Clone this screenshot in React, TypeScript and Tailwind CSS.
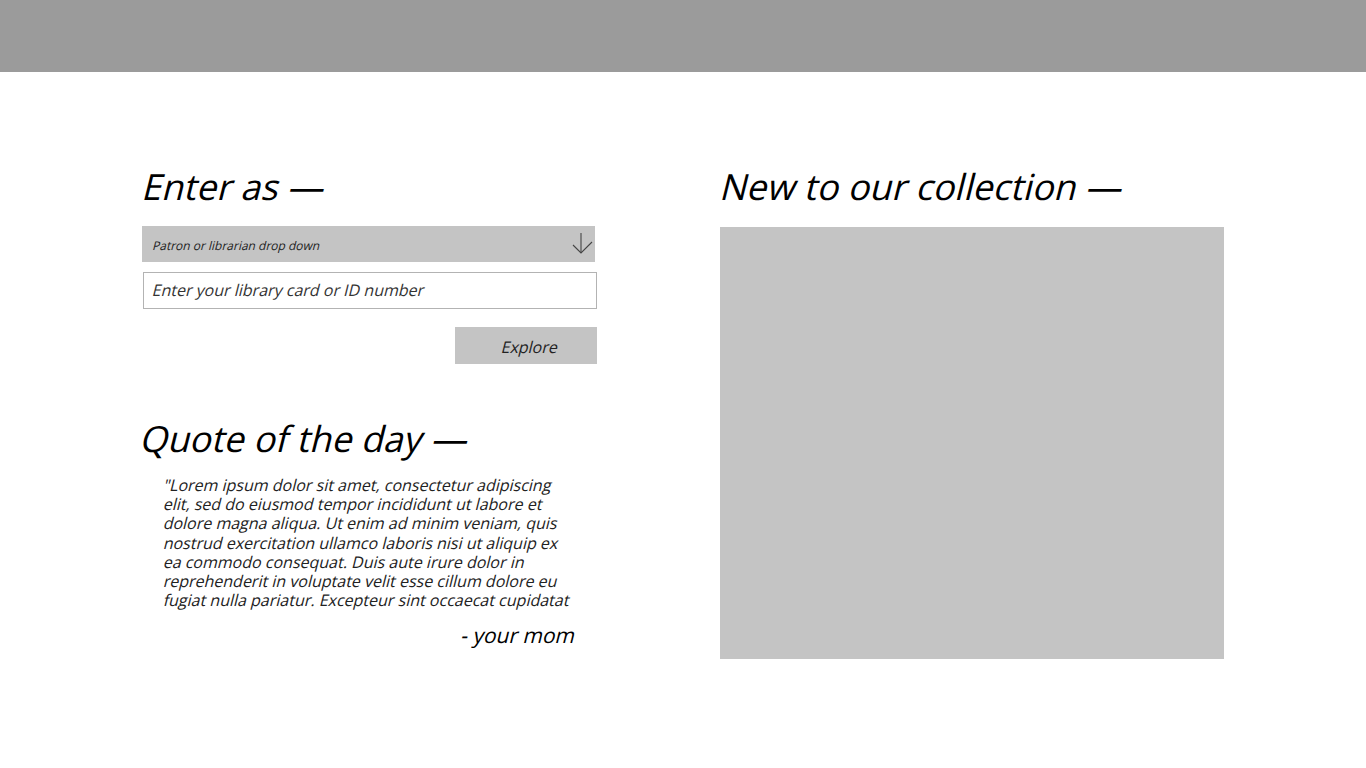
const quoteLines = [
  '"Lorem ipsum dolor sit amet, consectetur adipiscing',
  "elit, sed do eiusmod tempor incididunt ut labore et",
  "dolore magna aliqua. Ut enim ad minim veniam, quis",
  "nostrud exercitation ullamco laboris nisi ut aliquip ex",
  "ea commodo consequat. Duis aute irure dolor in",
  "reprehenderit in voluptate velit esse cillum dolore eu",
  "fugiat nulla pariatur. Excepteur sint occaecat cupidatat",
];

// slanted upright text, like a synthetic oblique
function Slant({ children }: { children: React.ReactNode }) {
  return <span className="inline-block -skew-x-[14deg] whitespace-pre">{children}</span>;
}

export default function App() {
  return (
    <div className="min-h-[768px] w-full bg-white font-['Open_Sans',sans-serif] text-black">
      <div className="h-[72px] w-full bg-[#9b9b9b]" />
      <div className="flex pl-[142px] pt-[97px]">
        <div className="flex w-[455px] flex-col">
          <h1 className="ml-[2px] text-[36px] leading-[36px] font-normal">
            <Slant>Enter as —</Slant>
          </h1>
          <div className="mt-[21px] flex h-[36px] w-[453px] items-center justify-between bg-[#c4c4c4] pl-[11px]">
            <span className="mt-[3px] text-[12px] text-[#222]">
              <Slant>Patron or librarian drop down</Slant>
            </span>
            <svg width="24" height="26" viewBox="0 0 24 26" fill="none" stroke="#444" strokeWidth="1.1">
              <path d="M10 2 V22" />
              <path d="M2 14 L10 22 L21 11" />
            </svg>
          </div>
          <div className="mt-[10px] ml-[1px] flex h-[37px] w-[454px] items-center border border-[#b3b3b3] pl-[9px]">
            <span className="-mt-[1px] text-[16px] text-[#333]">
              <Slant>Enter your library card or ID number</Slant>
            </span>
          </div>
          <div className="mt-[18px] flex justify-end">
            <div className="flex h-[37px] w-[142px] items-center justify-center bg-[#c4c4c4] pt-[2px] pl-[8px] text-[16px] text-[#222]">
              <Slant>Explore</Slant>
            </div>
          </div>
          <h2 className="mt-[57px] text-[36px] leading-[36px] font-normal">
            <Slant>Quote of the day —</Slant>
          </h2>
          <div className="mt-[19px] ml-[22px] flex w-[412px] flex-col text-[16px] leading-[19.2px] text-[#222]">
            {quoteLines.map((l) => (
              <div key={l}>
                <Slant>{l}</Slant>
              </div>
            ))}
          </div>
          <div className="mt-[13px] w-[434px] text-right text-[21px] leading-[24px]">
            <Slant>- your mom</Slant>
          </div>
        </div>
        <div className="ml-[123px] flex flex-col">
          <h2 className="ml-[2px] text-[36px] leading-[36px] font-normal">
            <Slant>New to our collection —</Slant>
          </h2>
          <div className="mt-[22px] h-[432px] w-[504px] bg-[#c4c4c4]" />
        </div>
      </div>
    </div>
  );
}
